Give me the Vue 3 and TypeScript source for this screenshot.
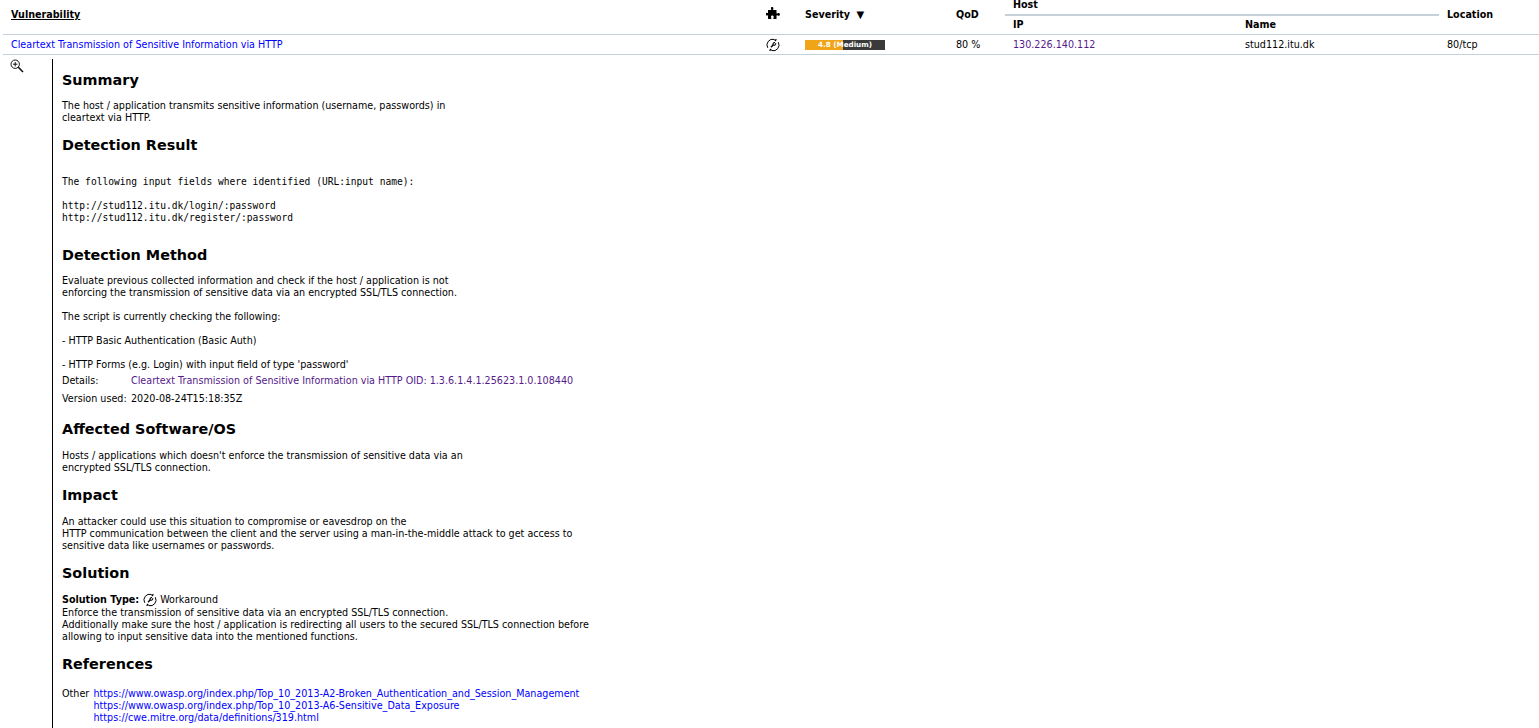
<script setup lang="ts">
const refs: string[] = [
  'https://www.owasp.org/index.php/Top_10_2013-A2-Broken_Authentication_and_Session_Management',
  'https://www.owasp.org/index.php/Top_10_2013-A6-Sensitive_Data_Exposure',
  'https://cwe.mitre.org/data/definitions/319.html',
]
</script>

<template>
  <div class="page">
    <div class="head">
      <div class="h-vuln"><span class="u">Vulnerability</span></div>
      <div class="h-icon">
        <svg width="14" height="14" viewBox="0 0 14 14"><path d="M5 1.200c0-1 .4-1.200 1.100-1.200S7.400.3 7.400 1.200c0 .7-.3.9-.3 1.500 0 .3.300.4.700.4H10.500V6c0 .4.200.6.500.6.500 0 .8-.5 1.500-.5.900 0 1.400.6 1.400 1.300s-.5 1.300-1.400 1.300c-.7 0-1-.5-1.500-.5-.3 0-.5.200-.5.600V12H7.800c-.4 0-.6-.2-.6-.5 0-.5.500-.8.500-1.500 0-.9-.6-1.400-1.300-1.400S5 9.100 5 10c0 .7.500 1 .5 1.500 0 .3-.2.500-.6.500H2V8.900c0-.4-.2-.6-.5-.6-.3 0-.5.300-1 .3C.2 8.600 0 8 0 7.200S.2 5.800.5 5.800c.5 0 .7.300 1 .3.300 0 .5-.2.500-.6V3.100h2.600c.4 0 .7-.1.700-.4 0-.6-.3-.8-.3-1.500z" fill="#000"/></svg>
      </div>
      <div class="h-sev">Severity <span class="tri">▼</span></div>
      <div class="h-qod">QoD</div>
      <div class="h-host">
        <div class="host-top">Host</div>
        <div class="host-sub"><span class="ip">IP</span><span>Name</span></div>
      </div>
      <div class="h-loc">Location</div>
    </div>

    <div class="row">
      <div class="c-vuln"><a class="link">Cleartext Transmission of Sensitive Information via HTTP</a></div>
      <div class="c-icon">
        <svg width="14" height="14" viewBox="0 0 14 14" fill="none" stroke="#000"><path d="M1.700 9.800A5.800 5.800 0 0 1 8.300 1.400" stroke-width="1"/><path d="M12.300 4.200A5.800 5.800 0 0 1 5.700 12.600" stroke-width="1"/><path d="M10.800 1 9.900 3.500 7.600 1.800zM3.200 13 4.100 10.500 6.400 12.200z" fill="#000" stroke="none"/><path d="M5 9.200 7.300 6.800" stroke-width="1.400"/><path d="M7.100 6.800A1.700 1.700 0 0 1 9 4.600M7.300 7.100A1.700 1.700 0 0 0 9.700 5.200" stroke-width="1.100"/></svg>
      </div>
      <div class="c-sev">
        <div class="bar"><div class="fill" style="width: 48%"></div><span class="bar-text">4.8 (Medium)</span></div>
      </div>
      <div class="c-qod">80 %</div>
      <div class="c-ip"><a class="visited">130.226.140.112</a></div>
      <div class="c-name">stud112.itu.dk</div>
      <div class="c-loc">80/tcp</div>
    </div>

    <div class="detail-wrap">
      <div class="zoom">
        <svg width="14" height="14" viewBox="0 0 14 14" fill="none" stroke="#111"><circle cx="5.200" cy="5.200" r="4.200" stroke-width="1"/><path d="M5.200 3v4.400M3 5.200h4.400" stroke-width="1"/><path d="M8.300 8.300 13 13" stroke-width="1.600"/></svg>
      </div>
      <div class="detail">
        <h2>Summary</h2>
        <p>The host / application transmits sensitive information (username, passwords) in<br>cleartext via HTTP.</p>

        <h2>Detection Result</h2>
        <pre>The following input fields where identified (URL:input name):

http://stud112.itu.dk/login/:password
http://stud112.itu.dk/register/:password</pre>

        <h2 class="h-method">Detection Method</h2>
        <p>Evaluate previous collected information and check if the host / application is not<br>enforcing the transmission of sensitive data via an encrypted SSL/TLS connection.</p>
        <p class="gap">The script is currently checking the following:</p>
        <p class="gap">- HTTP Basic Authentication (Basic Auth)</p>
        <p class="gap">- HTTP Forms (e.g. Login) with input field of type 'password'</p>
        <div class="info first-info"><span class="lbl">Details:</span><a class="visited">Cleartext Transmission of Sensitive Information via HTTP OID: 1.3.6.1.4.1.25623.1.0.108440</a></div>
        <div class="info"><span class="lbl">Version used:</span><span>2020-08-24T15:18:35Z</span></div>

        <h2 class="h-aff">Affected Software/OS</h2>
        <p>Hosts / applications which doesn't enforce the transmission of sensitive data via an<br>encrypted SSL/TLS connection.</p>

        <h2 class="h-impact">Impact</h2>
        <p>An attacker could use this situation to compromise or eavesdrop on the<br>HTTP communication between the client and the server using a man-in-the-middle attack to get access to<br>sensitive data like usernames or passwords.</p>

        <h2>Solution</h2>
        <div class="sol-type">
          <b>Solution Type:</b>
          <svg width="14" height="14" viewBox="0 0 14 14" fill="none" stroke="#000"><path d="M1.700 9.800A5.800 5.800 0 0 1 8.300 1.400" stroke-width="1"/><path d="M12.300 4.200A5.800 5.800 0 0 1 5.700 12.600" stroke-width="1"/><path d="M10.800 1 9.900 3.500 7.600 1.800zM3.200 13 4.100 10.500 6.400 12.200z" fill="#000" stroke="none"/><path d="M5 9.200 7.300 6.800" stroke-width="1.400"/><path d="M7.100 6.800A1.700 1.700 0 0 1 9 4.600M7.300 7.100A1.700 1.700 0 0 0 9.700 5.200" stroke-width="1.100"/></svg>
          <span>Workaround</span>
        </div>
        <p>Enforce the transmission of sensitive data via an encrypted SSL/TLS connection.<br>Additionally make sure the host / application is redirecting all users to the secured SSL/TLS connection before<br>allowing to input sensitive data into the mentioned functions.</p>

        <h2>References</h2>
        <div class="refs">
          <span class="other">Other</span>
          <div class="ref-list"><a v-for="r in refs" :key="r" class="link">{{ r }}</a></div>
        </div>
      </div>
    </div>
  </div>
</template>

<style>
html, body { margin: 0; padding: 0; background: #fff; overflow: hidden; }
</style>

<style scoped>
.page {
  height: 728px;
  overflow: hidden;
  font-family: "DejaVu Sans", Verdana, sans-serif;
  font-size: 9.6px;
  line-height: 12px;
  color: #000;
  padding-left: 3px;
  display: flex;
  flex-direction: column;
}
.head {
  display: grid;
  grid-template-columns: 755px 39px 151px 57px 434px 1fr;
  height: 34px;
  border-bottom: 1px solid #c5d0da;
  font-weight: bold;
  overflow: hidden;
}
.h-vuln { padding: 9px 0 0 8px; }
.u { text-decoration: underline; }
.h-icon { padding-top: 7px; padding-left: 8px; }
.h-sev { padding: 9px 0 0 8px; }
.tri { font-size: 10px; margin-left: 3px; }
.h-qod { padding: 9px 0 0 8px; }
.h-host { display: flex; flex-direction: column; }
.host-top { height: 14px; padding: 0 0 0 8px; line-height: 10px; border-bottom: 2px solid #c5d0da; }
.host-sub { display: grid; grid-template-columns: 232px 1fr; padding: 3px 0 0 8px; }
.h-loc { padding: 9px 0 0 8px; }
.row {
  display: grid;
  grid-template-columns: 755px 39px 151px 57px 232px 202px 1fr;
  height: 19px;
  border-bottom: 1px solid #c5d0da;
  align-items: center;
}
.c-vuln, .c-icon, .c-sev, .c-qod, .c-ip, .c-name, .c-loc { padding-left: 8px; }
.c-icon { height: 14px; }
.link { color: #0000ff; }
.visited { color: #551a8b; }
.bar {
  position: relative;
  width: 80px;
  height: 10px;
  background: #3a3a3a;
  text-align: center;
}
.fill { height: 100%; background: #f0a519; }
.bar-text {
  position: absolute;
  left: 0; right: 0; top: -1px;
  color: #fff;
  font-size: 7.2px;
  font-weight: bold;
}
.detail-wrap {
  flex: 1;
  display: flex;
  padding-top: 4px;
}
.zoom { width: 49px; padding-left: 7px; box-sizing: border-box; }
.detail {
  border-left: 1px solid #000;
  padding-left: 9px;
  flex: 1;
}
h2 {
  font-size: 14.4px;
  line-height: 18px;
  font-weight: bold;
  margin: 12px 0 11px;
}
p { margin: 0; }
p.gap { margin-top: 12px; }
pre {
  font-family: "DejaVu Sans Mono", monospace;
  font-size: 9.6px;
  line-height: 12px;
  margin: 22px 0 0;
}
.h-method { margin-top: 22px; }
.info { display: flex; margin-top: 6px; }
.first-info { margin-top: 4px; }
.lbl { width: 69px; }
.h-aff { margin-top: 15px; margin-bottom: 12px; }
.h-impact { margin-bottom: 12px; }
.sol-type { display: flex; align-items: center; gap: 3.5px; height: 14px; }
.refs { display: flex; margin-top: 15px; }
.other { width: 31.5px; }
.ref-list { display: flex; flex-direction: column; }
</style>
